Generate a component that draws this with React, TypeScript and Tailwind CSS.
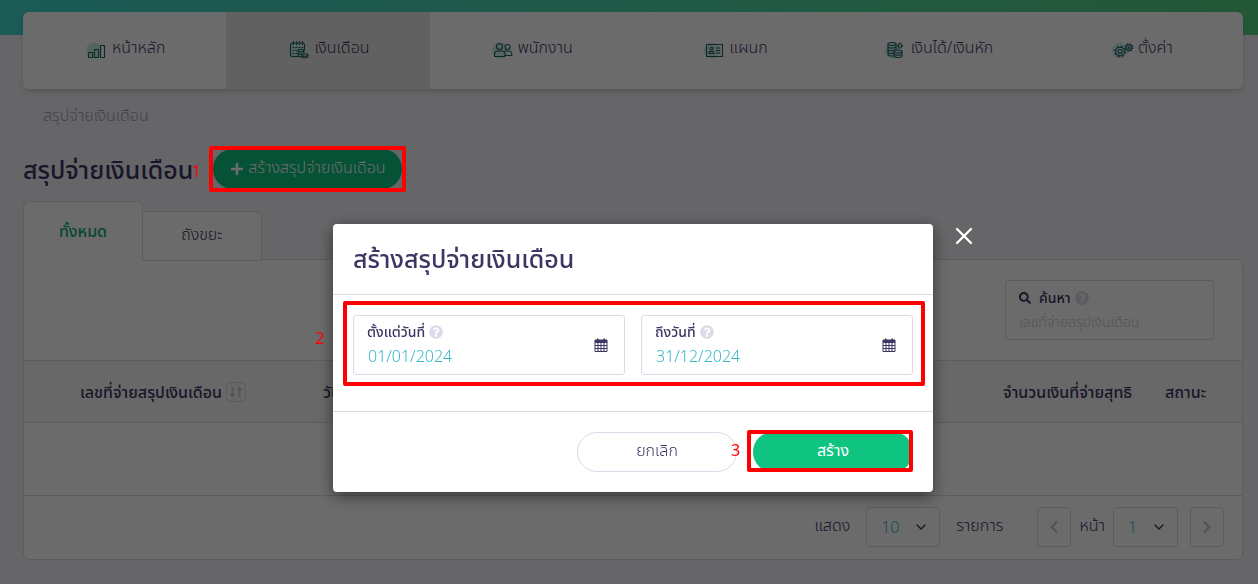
import React, { useState } from 'react';
import { ChevronDown, X } from 'lucide-react';
import {
  FaChevronLeft,
  FaChevronRight,
  FaLongArrowAltDown,
  FaLongArrowAltUp,
  FaPlus,
  FaQuestionCircle,
  FaSearch,
} from 'react-icons/fa';

interface NavItem {
  label: string;
  icon: React.ReactNode;
  active?: boolean;
}

const NavIcon = ({ children }: { children: React.ReactNode }) => (
  <svg
    width="22"
    height="22"
    viewBox="0 0 22 22"
    fill="none"
    stroke="#1c6068"
    strokeWidth="1.1"
    strokeLinecap="round"
    strokeLinejoin="round"
    aria-hidden="true"
  >
    <circle cx="8" cy="12.5" r="8" fill="#cdeee2" stroke="none" />
    {children}
  </svg>
);

const NAV_ITEMS: NavItem[] = [
  {
    label: 'หน้าหลัก',
    icon: (
      <NavIcon>
        <rect x="2.5" y="14.5" width="4" height="5" />
        <rect x="8.5" y="11.5" width="4" height="8" />
        <rect x="14.5" y="7.5" width="4" height="12" />
      </NavIcon>
    ),
  },
  {
    label: 'เงินเดือน',
    active: true,
    icon: (
      <NavIcon>
        <path d="M10 18.5H4.500a2 2 0 0 1-2-2V7a2 2 0 0 1 2-2h10a2 2 0 0 1 2 2v5" />
        <path d="M5.500 3.500v3M8.500 3.500v3M11.500 3.500v3M14.500 3.500v3" />
        <path d="M5 9.500h10M5 12.500h5M5 15.500h5" strokeDasharray="1 2" />
        <ellipse cx="13" cy="12.500" rx="2.800" ry="1.200" />
        <path d="M10.200 12.500v5c0 1 3 1.200 4 1M15.800 12.500v2.500M10.200 15c0 1 3 1.200 4 1" />
        <ellipse cx="17" cy="17" rx="2.800" ry="1.200" />
        <path d="M14.200 17v2c0 1 5.600 1 5.600 0v-2" />
      </NavIcon>
    ),
  },
  {
    label: 'พนักงาน',
    icon: (
      <NavIcon>
        <circle cx="7.500" cy="8.500" r="3" />
        <circle cx="15.500" cy="9" r="2.500" />
        <path d="M2.500 18.500v-2a3.500 3.500 0 0 1 3.500-3.500h3.500a3.500 3.500 0 0 1 3.500 3.500v2z" />
        <path d="M12.500 13h4a3.300 3.300 0 0 1 3.300 3.300v1.200H13" />
      </NavIcon>
    ),
  },
  {
    label: 'แผนก',
    icon: (
      <NavIcon>
        <rect x="2.500" y="6.500" width="16" height="12" />
        <circle cx="7.500" cy="10.500" r="1.500" />
        <path d="M5 15.500v-1c0-1.500 5-1.500 5 0v1zM12.500 10h3.500M12.500 12.500h3.500M12.500 15h3.500" />
      </NavIcon>
    ),
  },
  {
    label: 'เงินได้/เงินหัก',
    icon: (
      <NavIcon>
        <ellipse cx="7" cy="6" rx="4" ry="1.500" />
        <path d="M3 6v10.500c0 1.200 3 1.700 5 1.500M11 6v5M3 8.500c0 2 8 2 8 0M3 11.200c0 2 7 2 7 .5M3 13.900c0 1.500 3 1.700 5 1.500" />
        <ellipse cx="13" cy="13.500" rx="4" ry="1.500" />
        <path d="M9 13.500v4.500c0 2 8 2 8 0v-4.500M9 15.800c0 2 8 2 8 0" />
        <path d="M14 10V8h-1.500L15 5l2.700 3h-1.500v2" />
      </NavIcon>
    ),
  },
  {
    label: 'ตั้งค่า',
    icon: (
      <NavIcon>
        <circle cx="8" cy="13.500" r="2" />
        <circle cx="8" cy="13.500" r="4.300" />
        <circle cx="8" cy="13.500" r="5.300" strokeDasharray="2 2.160" strokeLinecap="butt" />
        <circle cx="17" cy="9.500" r="1" />
        <circle cx="17" cy="9.500" r="2.900" />
        <circle cx="17" cy="9.500" r="3.800" strokeDasharray="1.500 1.480" strokeLinecap="butt" />
      </NavIcon>
    ),
  },
];

const HelpIcon = () => <FaQuestionCircle size={14} className="text-[#dcdae8]" />;

interface CalloutProps {
  step: number;
  boxClass: string;
  numberClass: string;
}

const Callout = ({ step, boxClass, numberClass }: CalloutProps) => (
  <>
    <span className={`pointer-events-none absolute rounded-xs border-4 border-[#ff0000] ${boxClass}`} />
    <span className={`pointer-events-none absolute text-base leading-5 text-[#ff0000] ${numberClass}`}>{step}</span>
  </>
);

interface DateFieldProps {
  id: string;
  label: string;
  value: string;
  onChange: (value: string) => void;
}

const DateField = ({ id, label, value, onChange }: DateFieldProps) => (
  <div className="flex h-[60px] flex-1 items-center rounded-[3px] border border-[#dcdae8] pr-4 pl-[13px]">
    <div className="min-w-0 flex-1">
      <div className="flex items-center gap-1">
        <label htmlFor={id} className="text-sm leading-5 font-medium">{label}</label>
        <HelpIcon />
      </div>
      <input
        id={id}
        value={value}
        onChange={(e) => onChange(e.target.value)}
        className="block w-full bg-transparent pt-0.5 pl-px text-base leading-6 font-light text-[#36b9c8] outline-none"
      />
    </div>
    <button type="button" aria-label={label} className="shrink-0">
      <svg width="14" height="14" viewBox="0 0 14 14" fill="none" aria-hidden="true">
        <path d="M1 2h12v11.500H1z" stroke="#3a3763" />
        <path d="M1 2h12v3H1zM3 .5h1.500v2H3zM9.500.5H11v2H9.500z" fill="#3a3763" />
        <path d="M1 7.500h12M1 10.500h12M4 5v8M7 5v8M10 5v8" stroke="#3a3763" />
      </svg>
    </button>
  </div>
);

interface PagerSelectProps {
  label: string;
  options: string[];
  className: string;
}

const PagerSelect = ({ label, options, className }: PagerSelectProps) => (
  <div className={`relative h-10 ${className}`}>
    <select
      aria-label={label}
      className="h-full w-full appearance-none rounded border border-[#dcdae8] bg-transparent pl-[14px] text-base font-light text-[#36b9c8]"
    >
      {options.map((o) => (
        <option key={o}>{o}</option>
      ))}
    </select>
    <ChevronDown size={16} className="pointer-events-none absolute top-3 right-[11px]" />
  </div>
);

export default function App() {
  const [from, setFrom] = useState('01/01/2024');
  const [to, setTo] = useState('31/12/2024');

  return (
    <div className="relative min-h-screen bg-[#f2f2f7] pt-3 pr-[15px] pb-6 pl-[23px] font-['Noto_Sans','Noto_Sans_Thai',sans-serif] text-[#3a3763]">
      <div className="absolute inset-x-0 top-0 h-[35px] bg-linear-to-r from-[#40d6cc] to-[#56d083]" />

      <nav className="relative flex h-[77px] overflow-hidden rounded-md bg-white shadow-md">
        {NAV_ITEMS.map((item) => (
          <a
            key={item.label}
            href="#"
            className={`flex flex-1 items-center justify-center gap-1 pb-1 pl-0.5 text-base font-light ${item.active ? 'bg-[#e8e8e8]' : ''}`}
          >
            {item.icon}
            <span className="pb-1">{item.label}</span>
          </a>
        ))}
      </nav>

      <p className="mt-4 pl-5 text-base leading-5 font-light text-[#a19fb0]">สรุปจ่ายเงินเดือน</p>

      <div className="mt-6 flex h-10 items-center gap-5">
        <h1 className="text-[25px] leading-8 font-medium">สรุปจ่ายเงินเดือน</h1>
        <div className="relative">
          <button
            type="button"
            className="flex h-10 w-[189px] items-center justify-center gap-1 rounded-full bg-[#0fc380] text-base font-light text-white"
          >
            <FaPlus size={14} />
            <span className="pb-1">สร้างสรุปจ่ายเงินเดือน</span>
          </button>
          <Callout step={1} boxClass="-inset-x-1 -inset-y-[3px] z-60" numberClass="top-3 -left-[22px] z-60" />
        </div>
      </div>

      <div className="mt-3 flex items-end">
        <button
          type="button"
          className="relative z-10 -mb-px h-[60px] w-[120px] rounded-t-md border border-b-0 border-[#dcdae8] bg-white pb-0.5 text-base font-medium text-[#0fa971]"
        >
          ทั้งหมด
        </button>
        <button
          type="button"
          className="relative -mb-px -ml-px h-[50px] w-[120px] rounded-tr-md border border-[#dcdae8] bg-white pb-1 text-base font-light"
        >
          ถังขยะ
        </button>
      </div>

      <section className="-mt-px rounded-b-md rounded-tr-md border border-[#dcdae8] bg-white">
        <div className="flex h-[100px] items-center justify-end pr-7">
          <div className="h-[60px] w-[209px] rounded-[3px] border border-[#dcdae8] px-[13px] pt-[7px]">
            <div className="flex items-center gap-1">
              <FaSearch size={12} />
              <label htmlFor="search" className="pl-1 text-sm leading-5 font-medium">ค้นหา</label>
              <HelpIcon />
            </div>
            <input
              id="search"
              placeholder="เลขที่จ่ายสรุปเงินเดือน"
              className="block w-full bg-transparent pt-0.5 text-sm leading-6 font-light outline-none placeholder:text-[#c9c8d2]"
            />
          </div>
        </div>

        <table className="w-full table-fixed border-collapse text-left">
          <colgroup>
            <col className="w-[285px]" />
            <col />
            <col className="w-[162px]" />
            <col className="w-[77px]" />
          </colgroup>
          <thead>
            <tr className="h-[62px] border-y border-[#dcdae8] bg-[#f7f7f7] text-base whitespace-nowrap">
              <th className="pl-14 font-medium">
                <div className="flex items-center gap-1">
                  เลขที่จ่ายสรุปเงินเดือน
                  <button type="button" aria-label="เรียงลำดับ" className="flex h-5 w-5 items-center justify-center rounded border border-[#d8d8dc] text-[#c9c9d0]">
                    <FaLongArrowAltDown size={12} className="-mr-1" />
                    <FaLongArrowAltUp size={12} />
                  </button>
                </div>
              </th>
              <th className="pl-[14px] font-medium">วันที่จ่าย</th>
              <th className="font-medium">จำนวนเงินที่จ่ายสุทธิ</th>
              <th className="font-medium">สถานะ</th>
            </tr>
          </thead>
          <tbody>
            <tr className="h-[73px] border-b border-[#dcdae8]">
              <td colSpan={4} />
            </tr>
          </tbody>
        </table>

        <div className="flex h-[63px] items-center justify-end pr-[18px] pb-0.5 text-base font-light">
          <span className="mr-4 pb-1">แสดง</span>
          <PagerSelect label="แสดง" options={['10', '20', '50']} className="w-[74px]" />
          <span className="mr-[34px] ml-4 pb-1">รายการ</span>
          <button type="button" aria-label="ก่อนหน้า" className="flex h-10 w-[34px] items-center justify-center rounded border border-[#dcdae8] text-[#c4c3d0]">
            <FaChevronLeft size={14} />
          </button>
          <span className="mx-2 pb-1">หน้า</span>
          <PagerSelect label="หน้า" options={['1']} className="w-[65px]" />
          <button type="button" aria-label="ถัดไป" className="ml-3 flex h-10 w-[34px] items-center justify-center rounded border border-[#dcdae8] text-[#c4c3d0]">
            <FaChevronRight size={14} />
          </button>
        </div>
      </section>

      {/* Modal */}
      <div className="fixed inset-0 z-50 flex items-start justify-center bg-black/58 pt-56 pl-2">
        <div role="dialog" aria-labelledby="modal-title" className="relative w-[600px] rounded bg-white shadow-[0_4px_16px_rgba(0,0,0,0.5)]">
          <button type="button" aria-label="ปิด" className="absolute -top-0.5 -right-[45px] text-white">
            <X size={28} />
          </button>

          <div className="flex h-[71px] items-center border-b border-[#dcdae8] px-5">
            <h2 id="modal-title" className="text-[25px] font-medium">สร้างสรุปจ่ายเงินเดือน</h2>
          </div>

          <div className="relative flex h-[116px] gap-4 px-5 pt-5">
            <DateField id="from" label="ตั้งแต่วันที่" value={from} onChange={setFrom} />
            <DateField id="to" label="ถึงวันที่" value={to} onChange={setTo} />
            <Callout step={2} boxClass="top-1.5 right-2 left-2.5 h-[85px]" numberClass="top-[33px] -left-[18px]" />
          </div>

          <div className="flex h-[81px] items-center justify-end gap-4 border-t border-[#dcdae8] px-5 text-base">
            <button type="button" className="h-10 w-40 rounded-full border border-[#dcdae8] bg-white pb-1 text-base font-light">
              ยกเลิก
            </button>
            <div className="relative">
              <button type="button" className="block h-10 w-40 rounded-full bg-[#0fc380] pb-1 text-base text-white">
                สร้าง
              </button>
              <Callout step={3} boxClass="-top-0.5 right-0 bottom-0 -left-1.5" numberClass="top-2 -left-[22px]" />
            </div>
          </div>
        </div>
      </div>
    </div>
  );
}
